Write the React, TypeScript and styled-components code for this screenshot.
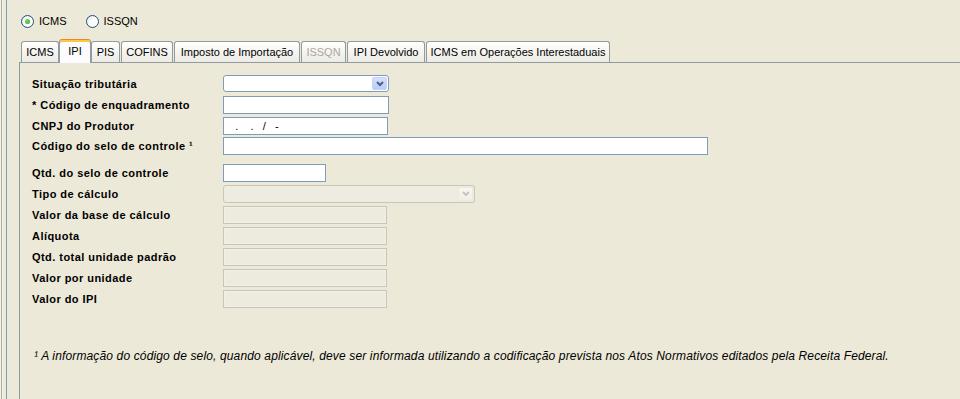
import React from "react";
import styled, { createGlobalStyle, css } from "styled-components";

const GlobalStyle = createGlobalStyle`
  html, body { margin: 0; padding: 0; background: #ECE9D8; overflow: hidden; }
  body { font-family: "Liberation Sans", Arial, sans-serif; font-size: 11px; color: #000; }
`;

const Page = styled.div`
  display: flex;
  width: 960px;
  height: 399px;
  overflow: hidden;
`;

const Gutter = styled.div`
  flex: none;
  width: 6px;
  background: linear-gradient(
    to right,
    #F4F3EE 0 1px,
    #ACA899 1px 2px,
    #F4F3EE 2px 3px,
    #ECE9D8 3px 6px
  );
  border-right: 1px solid #7F9DB9;
`;

const Main = styled.div`
  flex: 1;
  display: flex;
  flex-direction: column;
  padding: 15px 0 0 12px;
  min-width: 0;
`;

const RadioGroup = styled.div`
  display: flex;
  align-items: center;
  gap: 19px;
  height: 13px;
  margin-left: 2px;
`;

const RadioItem = styled.label`
  display: flex;
  align-items: center;
  gap: 5px;
  line-height: 13px;
`;

const RadioCircle = styled.span<{ $checked?: boolean }>`
  box-sizing: border-box;
  width: 13px;
  height: 13px;
  border-radius: 50%;
  border: 1px solid #1C5180;
  background: radial-gradient(circle at 65% 65%, #FFFFFF 0 35%, #E6E4DA 100%);
  display: flex;
  align-items: center;
  justify-content: center;
  ${(p) =>
    p.$checked &&
    css`
      &::after {
        content: "";
        width: 5px;
        height: 5px;
        border-radius: 50%;
        background: radial-gradient(circle at 40% 40%, #6FE26A, #21A121);
      }
    `}
`;

const TabStrip = styled.div`
  display: flex;
  align-items: flex-end;
  height: 23px;
  margin-top: 11px;
  padding-left: 2px;
`;

const Tab = styled.div<{ $w: number; $active?: boolean; $disabled?: boolean }>`
  box-sizing: border-box;
  flex: none;
  width: ${(p) => p.$w}px;
  height: 21px;
  margin-right: 1px;
  border: 1px solid #919B9C;
  border-bottom: none;
  border-radius: 3px 3px 0 0;
  background: linear-gradient(#FFFFFF, #F1F0EA 70%, #ECEBE6);
  color: ${(p) => (p.$disabled ? "#ACA899" : "#000")};
  display: flex;
  align-items: center;
  justify-content: center;
  white-space: nowrap;
  ${(p) =>
    p.$active &&
    css`
      position: relative;
      z-index: 1;
      height: 24px;
      margin-left: -1px;
      margin-right: 0;
      margin-bottom: -1px;
      padding-bottom: 1px;
      border-top: 1px solid #E68B2C;
      background: #FCFCFE;
      box-shadow: inset 0 2px 0 #FFC83C;
    `}
`;

const Panel = styled.div`
  flex: 1;
  border-top: 1px solid #919B9C;
  border-left: 1px solid #919B9C;
  padding: 12px 0 0 12px;
  display: flex;
  flex-direction: column;
`;

const Row = styled.div<{ $mb: number }>`
  display: flex;
  align-items: center;
  margin-bottom: ${(p) => p.$mb}px;
`;

const Label = styled.div`
  flex: none;
  width: 191px;
  font-weight: bold;
  letter-spacing: 0.45px;
  white-space: nowrap;
`;

const TextField = styled.div<{ $w: number; $disabled?: boolean }>`
  box-sizing: border-box;
  width: ${(p) => p.$w}px;
  height: 18px;
  border: 1px solid #7F9DB9;
  background: #FFFFFF;
  padding: 0 2px;
  line-height: 16px;
  white-space: pre;
  ${(p) =>
    p.$disabled &&
    css`
      border-color: #C9C6B8;
      background: #EDEADE;
      box-shadow: inset 0 0 0 1px #F1EFE6, inset 0 0 0 2px #EEEBE1;
    `}
`;

const Combo = styled.div<{ $w: number; $h: number; $disabled?: boolean }>`
  box-sizing: border-box;
  width: ${(p) => p.$w}px;
  height: ${(p) => p.$h}px;
  border: 1px solid ${(p) => (p.$disabled ? "#C9C6B8" : "#7F9DB9")};
  border-radius: 3px;
  background: ${(p) => (p.$disabled ? "#EEEBE1" : "#FFFFFF")};
  padding: 1px;
  display: flex;
  justify-content: flex-end;
`;

const ArrowButton = styled.div<{ $disabled?: boolean }>`
  box-sizing: border-box;
  width: 15px;
  height: 100%;
  border-radius: 2px;
  display: flex;
  align-items: center;
  justify-content: center;
  ${(p) =>
    p.$disabled
      ? css`
          background: linear-gradient(#F7F6F2, #EFEEE8);
          border: 1px solid #EAE8DF;
        `
      : css`
          background: linear-gradient(#D4E0FC, #B9CCF6);
          border: 1px solid #C3D3FD;
        `}
`;

const Footnote = styled.div`
  margin: 41px 0 0 2px;
  font-style: italic;
  font-size: 12px;
  letter-spacing: 0.14px;
  white-space: nowrap;
`;

const Chevron: React.FC<{ color: string }> = ({ color }) => (
  <svg width="8" height="6" viewBox="0 0 8 6">
    <polyline points="1,1 4,4 7,1" fill="none" stroke={color} strokeWidth="2" />
  </svg>
);

const tabs: { label: string; w: number; active?: boolean; disabled?: boolean }[] = [
  { label: "ICMS", w: 38 },
  { label: "IPI", w: 32, active: true },
  { label: "PIS", w: 29 },
  { label: "COFINS", w: 52 },
  { label: "Imposto de Importação", w: 126 },
  { label: "ISSQN", w: 45, disabled: true },
  { label: "IPI Devolvido", w: 78 },
  { label: "ICMS em Operações Interestaduais", w: 184 },
];

export default function App() {
  return (
    <>
      <GlobalStyle />
      <Page>
        <Gutter />
        <Main>
          <RadioGroup>
            <RadioItem>
              <RadioCircle $checked />
              ICMS
            </RadioItem>
            <RadioItem>
              <RadioCircle />
              ISSQN
            </RadioItem>
          </RadioGroup>
          <TabStrip>
            {tabs.map((t) => (
              <Tab key={t.label} $w={t.w} $active={t.active} $disabled={t.disabled}>
                {t.label}
              </Tab>
            ))}
          </TabStrip>
          <Panel>
            <Row $mb={4}>
              <Label>Situação tributária</Label>
              <Combo $w={166} $h={17}>
                <ArrowButton>
                  <Chevron color="#4D6185" />
                </ArrowButton>
              </Combo>
            </Row>
            <Row $mb={3}>
              <Label>* Código de enquadramento</Label>
              <TextField $w={166} />
            </Row>
            <Row $mb={2}>
              <Label>CNPJ do Produtor</Label>
              <TextField $w={165}>{"   .    .   /   -"}</TextField>
            </Row>
            <Row $mb={9}>
              <Label>Código do selo de controle ¹</Label>
              <TextField $w={485} />
            </Row>
            <Row $mb={3}>
              <Label>Qtd. do selo de controle</Label>
              <TextField $w={103} />
            </Row>
            <Row $mb={3}>
              <Label>Tipo de cálculo</Label>
              <Combo $w={252} $h={18} $disabled>
                <ArrowButton $disabled>
                  <Chevron color="#C9C6B8" />
                </ArrowButton>
              </Combo>
            </Row>
            <Row $mb={3}>
              <Label>Valor da base de cálculo</Label>
              <TextField $w={164} $disabled />
            </Row>
            <Row $mb={3}>
              <Label>Alíquota</Label>
              <TextField $w={164} $disabled />
            </Row>
            <Row $mb={3}>
              <Label>Qtd. total unidade padrão</Label>
              <TextField $w={164} $disabled />
            </Row>
            <Row $mb={3}>
              <Label>Valor por unidade</Label>
              <TextField $w={164} $disabled />
            </Row>
            <Row $mb={0}>
              <Label>Valor do IPI</Label>
              <TextField $w={164} $disabled />
            </Row>
            <Footnote>
              ¹ A informação do código de selo, quando aplicável, deve ser informada utilizando a
              codificação prevista nos Atos Normativos editados pela Receita Federal.
            </Footnote>
          </Panel>
        </Main>
      </Page>
    </>
  );
}
